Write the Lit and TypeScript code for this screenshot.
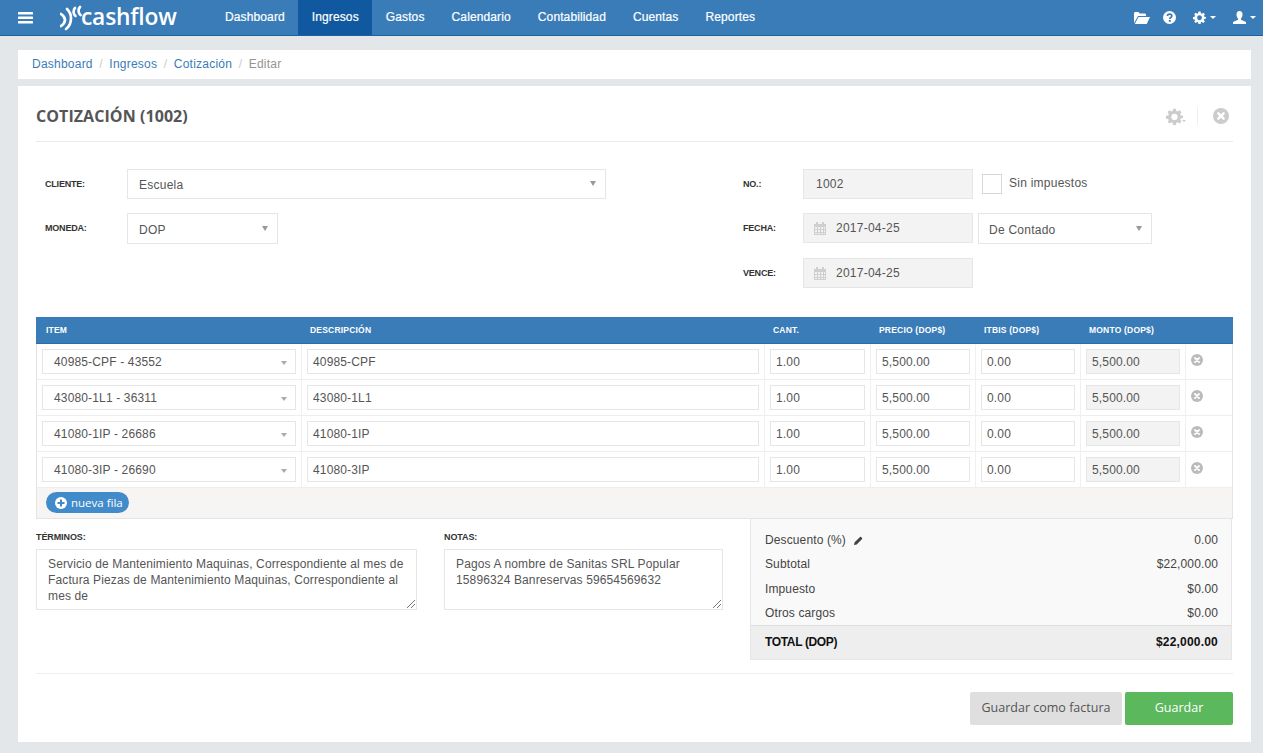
import { LitElement, html, css, svg } from "lit";
import { customElement } from "lit/decorators.js";

const rows = [
  ["40985-CPF - 43552", "40985-CPF"],
  ["43080-1L1 - 36311", "43080-1L1"],
  ["41080-1IP - 26686", "41080-1IP"],
  ["41080-3IP - 26690", "41080-3IP"],
];

const gear = (s: number, c: string) => html`<svg width=${s} height=${s} viewBox="0 0 24 24" fill=${c}><path fill-rule="evenodd" d="M10 1h4l.6 3.2 1.9.8 2.7-1.9 2.8 2.8-1.9 2.7.8 1.9L24 11v3l-3.2.6-.8 1.9 1.9 2.7-2.8 2.8-2.7-1.9-1.8.8L14 24h-4l-.6-3.1-1.8-.8-2.7 1.900-2.800-2.800L4 17.500l-.8-1.900L0 15v-4l3.200-.6.8-1.900-1.900-2.700 2.800-2.800 2.700 1.900 1.800-.8zM12 8a4.500 4.500 0 1 0 0 9 4.500 4.500 0 0 0 0-9z"/></svg>`;
const xcircle = (s: number, c: string) => html`<svg width=${s} height=${s} viewBox="0 0 24 24"><circle cx="12" cy="12" r="12" fill=${c}/><path d="M8 8l8 8M16 8l-8 8" stroke="#fff" stroke-width="3.600" stroke-linecap="round"/></svg>`;
const calendar = html`<svg class="cal" width="12" height="13" viewBox="0 0 12 13" fill="#cfcfcf"><path d="M0 2h12v11H0z"/><path d="M2 0h2v3H2zM8 0h2v3H8z"/><path d="M1 5h2v2H1zM4 5h2v2H4zM7 5h2v2H7zM10 5h1v2h-1zM1 8h2v2H1zM4 8h2v2H4zM7 8h2v2H7zM10 8h1v2h-1zM1 11h2v1H1zM4 11h2v1H4zM7 11h2v1H7zM10 11h1v1h-1z" fill="#f2f2f2"/></svg>`;
const logoMark = svg`<g fill="none" stroke="#fff" stroke-width="2.700" stroke-linecap="round">
  <path d="M1 9c3 2 4 4 4 6s-1 4-4 6"/>
  <path d="M7 4c3 3 4 6 4 9s-1 8-5 11"/>
  <path d="M15 3c-2 2-2 6 .5 8"/>
  <path d="M20 2c-2 2-2 6 .5 8"/>
</g>`;

@customElement("app-root")
export class AppRoot extends LitElement {
  static styles = css`
    :host { display: block; min-height: 753px; background: #e4e7ea; font-family: "Liberation Sans", Arial, sans-serif; font-size: 12px; color: #555; letter-spacing: .25px; }
    * { box-sizing: border-box; }
    .nav { height: 36px; background: #3a7cb8; border-bottom: 1px solid #1f5f9c; display: flex; align-items: stretch; color: #fff; }
    .burger { width: 60px; display: flex; align-items: center; padding-left: 18px; }
    .logo { width: 151px; display: flex; align-items: center; }
    .logo svg { margin-right: -1px; }
    .logo span { font-family: "Open Sans", sans-serif; font-weight: 600; font-size: 22.800px; letter-spacing: -.2px; line-height: 30px; margin-top: -2px; }
    .nav a { padding: 0 13px 2px 14px; display: flex; align-items: center; font-size: 12px; letter-spacing: .12px; -webkit-text-stroke: .2px #fff; }
    .nav a.on { background: #10589f; }
    .nav .grow { flex: 1; }
    .tools { display: flex; align-items: center; padding-right: 7px; }
    .tool { display: flex; align-items: center; gap: 4px; }
    .caret { width: 0; height: 0; border: 3px solid transparent; border-top-color: currentColor; border-bottom: 0; }
    .crumb { margin: 14px 12px 0 18px; height: 29px; background: #fff; display: flex; align-items: center; padding: 0 0 1px 14px; color: #949494; letter-spacing: .23px; }
    .crumb a { color: #3a7cb8; }
    .crumb i { font-style: normal; color: #ccc; padding: 0 6.500px; }
    .card { margin: 7px 12px 0 18px; height: 656px; background: #fff; padding: 0 18px; }
    .head { height: 56px; border-bottom: 1px solid #e9e9e9; display: flex; align-items: flex-start; padding-top: 19px; }
    .head h1 { margin: 0; flex: 1; font: 700 16px/22px "Open Sans", sans-serif; color: #555; letter-spacing: .07px; }
    .head .acts { display: flex; align-items: center; height: 22px; color: #ccc; padding-right: 4px; }
    .head .sep { width: 1px; height: 18px; background: #eee; margin: 0 15px 0 11px; }
    .head .acts .caret { border-width: 2px; border-bottom: 0; margin: 10px 0 0 -1px; }
    .form { display: flex; height: 175px; padding-top: 27px; }
    .col-l { width: 695px; padding-left: 9px; display: flex; flex-direction: column; gap: 14px; }
    .col-r { flex: 1; padding-left: 12px; display: flex; flex-direction: column; }
    .fr { display: flex; align-items: center; height: 30px; }
    .lab { font-size: 9px; font-weight: 700; color: #333; letter-spacing: -.2px; text-transform: uppercase; }
    .col-l .lab { width: 82px; }
    .col-r .lab { width: 60px; }
    .in { height: 30px; border: 1px solid #e6e6e6; background: #fff; display: flex; align-items: center; padding: 0 11px; position: relative; color: #555; }
    .ro { background: #f3f3f3; }
    .in.num { padding-left: 12px; }
    .cal { margin-right: 10px; flex: none; margin-left: -1px; }
    .sel::after { content: ""; position: absolute; right: 9px; top: 11px; border: 3.500px solid transparent; border-top: 5px solid #999; border-bottom: 0; }
    .chk { width: 20px; height: 20px; border: 1px solid #d8d8d0; margin: 0 7px 0 9px; }
    .w479 { width: 479px; padding-top: 1px; }
    .w151 { width: 151px; height: 31px; padding-top: 3px; }
    .w170 { width: 170px; }
    .w174 { width: 174px; height: 31px; margin-left: 5px; padding: 3px 0 0 10px; }
    .w151::after, .w174::after { top: 12px; }
    .sin { margin-top: -2px; }
    .t { border: 1px solid #e4e4e4; border-top: 0; width: 1197px; }
    .tr { display: grid; grid-template-columns: 265px 463px 106px 105px 105px 105px 1fr; }
    .th { background: #3a7cb8; height: 27px; color: #fff; font-size: 8.500px; font-weight: 700; margin: 0 -1px; letter-spacing: .2px; border-bottom: 1px solid #2e6da4; }
    .th > div { padding-left: 9px; display: flex; align-items: center; }
    .th > div:first-child { padding-left: 10px; }
    .td { height: 36px; border-bottom: 1px solid #eee; letter-spacing: .15px; }
    .td > div { border-right: 1px solid #f0f0f0; padding: 5px 5px 0 5px; }
    .td > div:last-child { border: 0; padding: 10px 0 0 5px; height: 36px; }
    .td .in { height: 25px; padding: 0 5px; width: 100%; }
    .td .sel { padding-left: 11px; }
    .td .sel::after { top: 11px; right: 8px; border-left-width: 3px; border-right-width: 3px; border-top-width: 4px; border-top-color: #aaa; }
    .foot { height: 30px; background: #f6f5f4; padding: 4px 0 0 9px; }
    .add { width: 83px; height: 21px; background: #428bca; border-radius: 11px; color: #fff; display: flex; align-items: center; padding-left: 9px; gap: 4px; font-size: 11.500px; font-family: "Open Sans", sans-serif; letter-spacing: 0; }
    .bottom { display: flex; height: 154px; }
    .notes { width: 714px; display: flex; gap: 27px; padding-top: 13px; }
    .notes label { display: block; font-size: 9px; font-weight: 700; color: #333; height: 17px; letter-spacing: -.1px; }
    .ta { height: 61px; border: 1px solid #e6e6e6; padding: 6px 11px; line-height: 16px; position: relative; color: #555; letter-spacing: .13px; }
    .ta svg { position: absolute; right: 1px; bottom: 1px; }
    .n1 { width: 381px; } .n2 { width: 279px; }
    .sum { width: 482px; height: 141px; background: #f9f9f9; border: 1px solid #e6e6e6; border-top: 0; display: flex; flex-direction: column; padding-top: 9px; letter-spacing: .12px; }
    .sr { display: flex; justify-content: space-between; align-items: center; height: 24.500px; padding: 0 13px 0 14px; color: #444; }
    .sr span.ed { display: flex; align-items: center; gap: 8px; }
    .sr.tot { margin-top: auto; height: 34px; padding-bottom: 2px; background: #eee; border-top: 1px solid #ddd; font-weight: 700; color: #111; }
    .tot span:first-child { letter-spacing: -.35px; }
    .tot span:last-child { letter-spacing: .2px; }
    .ft { border-top: 1px solid #eee; padding-top: 18px; display: flex; justify-content: flex-end; gap: 3px; width: 1197px; }
    .btn { height: 33px; display: flex; align-items: center; justify-content: center; font: 12.500px "Open Sans", sans-serif; border-radius: 2px; letter-spacing: 0; padding-bottom: 2px; }
    .b1 { width: 152px; background: #dfdfdf; color: #555; }
    .b2 { width: 108px; background: #5cb85c; color: #fff; }
  `;

  render() {
    return html`
      <div class="nav">
        <div class="burger"><svg width="15" height="12" viewBox="0 0 15 12" fill="#fff"><rect width="15" height="2.500" y="0" rx=".5"/><rect width="15" height="2.500" y="4.500" rx=".5"/><rect width="15" height="2.500" y="9" rx=".5"/></svg></div>
        <div class="logo"><svg width="22" height="26" viewBox="0 0 22 26">${logoMark}</svg><span>cashflow</span></div>
        ${["Dashboard", "Ingresos", "Gastos", "Calendario", "Contabilidad", "Cuentas", "Reportes"].map((n) => html`<a class=${n === "Ingresos" ? "on" : ""}>${n}</a>`)}
        <div class="grow"></div>
        <div class="tools">
          <div class="tool" style="margin-right:13px"><svg width="16" height="12" viewBox="0 0 16 12" fill="#fff"><path d="M0 1.500C0 .7.600 0 1.300 0h3.200l1 1.500h5.200c.7 0 1.300.6 1.300 1.300V4H4L1 9.500 0 11z"/><path d="M4.500 5H16l-3.300 7H0.800z"/></svg></div>
          <div class="tool" style="margin-right:17px"><svg width="13" height="13" viewBox="0 0 13 13"><circle cx="6.500" cy="6.500" r="6.500" fill="#fff"/><path d="M4.300 5C4.500 3.700 5.500 3.100 6.600 3.100c1.300 0 2.200.8 2.200 1.800 0 1.600-2 1.600-2 3" fill="none" stroke="#3a7cb8" stroke-width="1.700"/><rect x="5.800" y="9" width="2" height="1.800" fill="#3a7cb8"/></svg></div>
          <div class="tool" style="margin-right:17px">${gear(13, "#fff")}<span class="caret"></span></div>
          <div class="tool"><svg width="13" height="13" viewBox="0 0 13 13" fill="#fff"><path d="M6.500 0C8.500 0 9.500 1.500 9.500 3.500 9.500 5.500 8.500 7 8 7.500v1.200L13 11v2H0v-2l5-2.300V7.500C4.500 7 3.500 5.500 3.500 3.500 3.500 1.500 4.500 0 6.500 0z"/></svg><span class="caret"></span></div>
        </div>
      </div>
      <div class="crumb"><a>Dashboard</a><i>/</i><a>Ingresos</a><i>/</i><a>Cotización</a><i>/</i><span>Editar</span></div>
      <div class="card">
        <div class="head">
          <h1>COTIZACIÓN (1002)</h1>
          <div class="acts">${gear(17, "#ccc")}<span class="caret"></span><span class="sep"></span>${xcircle(16, "#ccc")}</div>
        </div>
        <div class="form">
          <div class="col-l">
            <div class="fr"><span class="lab">Cliente:</span><div class="in sel w479">Escuela</div></div>
            <div class="fr"><span class="lab">Moneda:</span><div class="in sel w151">DOP</div></div>
          </div>
          <div class="col-r">
            <div class="fr"><span class="lab">No.:</span><div class="in ro num w170">1002</div><span class="chk"></span><span class="sin">Sin impuestos</span></div>
            <div class="fr" style="margin-top:14px"><span class="lab">Fecha:</span><div class="in ro w170">${calendar}2017-04-25</div><div class="in sel w174">De Contado</div></div>
            <div class="fr" style="margin-top:15px"><span class="lab">Vence:</span><div class="in ro w170">${calendar}2017-04-25</div></div>
          </div>
        </div>
        <div class="t">
          <div class="tr th"><div>ITEM</div><div>DESCRIPCIÓN</div><div>CANT.</div><div>PRECIO (DOP$)</div><div>ITBIS (DOP$)</div><div>MONTO (DOP$)</div><div></div></div>
          ${rows.map((r) => html`<div class="tr td">
            <div><div class="in sel">${r[0]}</div></div>
            <div><div class="in">${r[1]}</div></div>
            <div><div class="in">1.00</div></div>
            <div><div class="in">5,500.00</div></div>
            <div><div class="in">0.00</div></div>
            <div><div class="in ro">5,500.00</div></div>
            <div>${xcircle(12, "#bbb")}</div>
          </div>`)}
          <div class="foot"><div class="add"><svg width="12" height="12" viewBox="0 0 12 12"><circle cx="6" cy="6" r="6" fill="#fff"/><path d="M6 2.500v7M2.500 6h7" stroke="#428bca" stroke-width="2"/></svg>nueva fila</div></div>
        </div>
        <div class="bottom">
          <div class="notes">
            <div class="n1"><label>TÉRMINOS:</label><div class="ta">Servicio de Mantenimiento Maquinas, Correspondiente al mes de Factura Piezas de Mantenimiento Maquinas, Correspondiente al mes de<svg width="8" height="8" viewBox="0 0 8 8" stroke="#777" fill="none"><path d="M0 8L8 0M4 8l4-4"/></svg></div></div>
            <div class="n2"><label>NOTAS:</label><div class="ta">Pagos A nombre de Sanitas SRL Popular 15896324 Banreservas 59654569632<svg width="8" height="8" viewBox="0 0 8 8" stroke="#777" fill="none"><path d="M0 8L8 0M4 8l4-4"/></svg></div></div>
          </div>
          <div class="sum">
            <div class="sr"><span class="ed">Descuento (%) <svg width="9" height="9" viewBox="0 0 9 9" fill="#444"><path d="M0 9l.6-2.700L6 .9c.3-.3.7-.3 1 0l1.100 1.100c.3.3.3.7 0 1L2.700 8.400z"/></svg></span><span>0.00</span></div>
            <div class="sr"><span>Subtotal</span><span>$22,000.00</span></div>
            <div class="sr"><span>Impuesto</span><span>$0.00</span></div>
            <div class="sr"><span>Otros cargos</span><span>$0.00</span></div>
            <div class="sr tot"><span>TOTAL (DOP)</span><span>$22,000.00</span></div>
          </div>
        </div>
        <div class="ft"><div class="btn b1">Guardar como factura</div><div class="btn b2">Guardar</div></div>
      </div>
    `;
  }
}
